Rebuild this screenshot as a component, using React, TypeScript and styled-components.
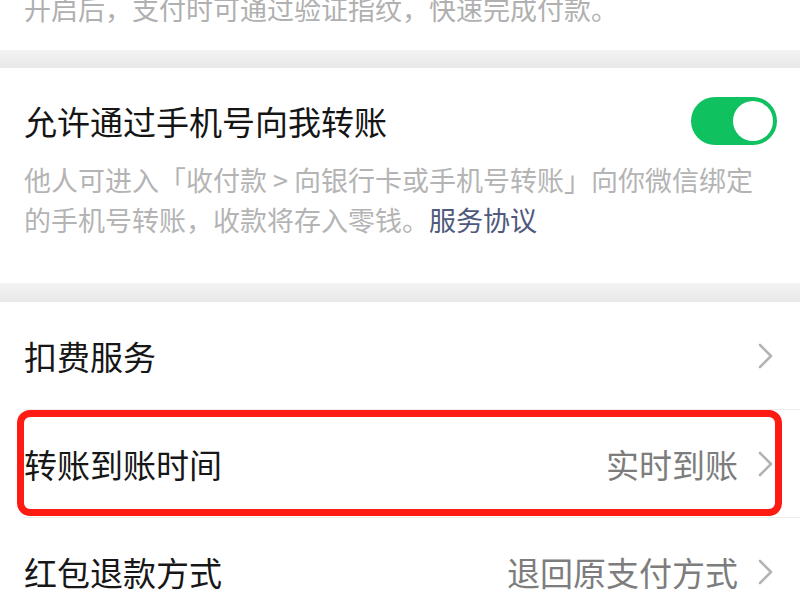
import styled, { createGlobalStyle } from 'styled-components';

const GlobalStyle = createGlobalStyle`
  html, body {
    margin: 0;
    padding: 0;
    background: #ffffff;
    font-family: "Noto Sans CJK SC", "Noto Sans", sans-serif;
  }
  #root {
    width: 800px;
    height: 600px;
    overflow: hidden;
  }
`;

const Page = styled.div`
  display: flex;
  flex-direction: column;
  width: 800px;
`;

const Section = styled.section<{ $top?: number; $bottom?: number }>`
  background: #ffffff;
  padding: ${({ $top = 0 }) => $top}px 24px ${({ $bottom = 0 }) => $bottom}px;
`;

// the first block is scrolled partly out of view
const ClippedSection = styled(Section)`
  margin-top: -11px;
`;

const Band = styled.div<{ $h: number }>`
  height: ${({ $h }) => $h}px;
  background: linear-gradient(#f3f3f3, #e8e8e8);
`;

const Hint = styled.div`
  font-size: 27px;
  line-height: 40px;
  color: #b0b0b0;
  white-space: nowrap;
`;

const SwitchRow = styled.div`
  display: flex;
  align-items: center;
  justify-content: space-between;
  height: 48px;
`;

const Title = styled.div`
  font-size: 33px;
  line-height: 48px;
  color: #151515;
  white-space: nowrap;
`;

const Toggle = styled.span<{ $on: boolean }>`
  display: flex;
  justify-content: ${({ $on }) => ($on ? 'flex-end' : 'flex-start')};
  align-items: center;
  box-sizing: border-box;
  width: 86px;
  height: 48px;
  padding: 4px;
  margin-right: -1px;
  border-radius: 24px;
  background: ${({ $on }) => ($on ? '#10c160' : '#e5e5e5')};
`;

const Knob = styled.span`
  width: 40px;
  height: 40px;
  border-radius: 50%;
  background: #ffffff;
`;

const Desc = styled.p`
  margin: 15px 0 0;
  font-size: 27px;
  line-height: 40px;
  color: #b4b4b4;
  white-space: nowrap;
`;

const Link = styled.span`
  color: #4f5a7c;
`;

const List = styled.div`
  display: flex;
  flex-direction: column;
  background: #ffffff;
`;

const Row = styled.div`
  position: relative;
  padding-left: 24px;
`;

const RowInner = styled.div`
  display: flex;
  align-items: center;
  height: 108px;
  padding-right: 27px;
  border-bottom: 1px solid #ececec;
  box-sizing: border-box;
`;

const Label = styled.span`
  flex: 1;
  font-size: 33px;
  color: #171717;
  white-space: nowrap;
`;

const Value = styled.span`
  font-size: 33px;
  color: #7d7d7d;
  margin-right: 20px;
  white-space: nowrap;
`;

const Highlight = styled.div`
  position: absolute;
  left: 17px;
  top: 0;
  width: 765px;
  height: 106px;
  box-sizing: border-box;
  border: 7px solid #fe1b14;
  border-radius: 13px;
  pointer-events: none;
`;

const Chevron = () => (
  <svg width="15" height="26" viewBox="0 0 15 26" fill="none">
    <path d="M2 2 L13 13 L2 24" stroke="#b3b3b3" strokeWidth="2.6" strokeLinecap="round" strokeLinejoin="round" />
  </svg>
);

interface ItemProps {
  label: string;
  value?: string;
  marked?: boolean;
}

const Item = ({ label, value, marked }: ItemProps) => (
  <Row>
    <RowInner>
      <Label>{label}</Label>
      {value && <Value>{value}</Value>}
      <Chevron />
    </RowInner>
    {marked && <Highlight />}
  </Row>
);

export default function App() {
  return (
    <Page>
      <GlobalStyle />
      <ClippedSection $bottom={21}>
        <Hint>开启后，支付时可通过验证指纹，快速完成付款。</Hint>
      </ClippedSection>
      <Band $h={18} />
      <Section $top={29} $bottom={43}>
        <SwitchRow>
          <Title>允许通过手机号向我转账</Title>
          <Toggle $on>
            <Knob />
          </Toggle>
        </SwitchRow>
        <Desc>
          他人可进入「收付款 &gt; 向银行卡或手机号转账」向你微信绑定
          <br />
          的手机号转账，收款将存入零钱。<Link>服务协议</Link>
        </Desc>
      </Section>
      <Band $h={19} />
      <List>
        <Item label="扣费服务" />
        <Item label="转账到账时间" value="实时到账" marked />
        <Item label="红包退款方式" value="退回原支付方式" />
      </List>
    </Page>
  );
}
